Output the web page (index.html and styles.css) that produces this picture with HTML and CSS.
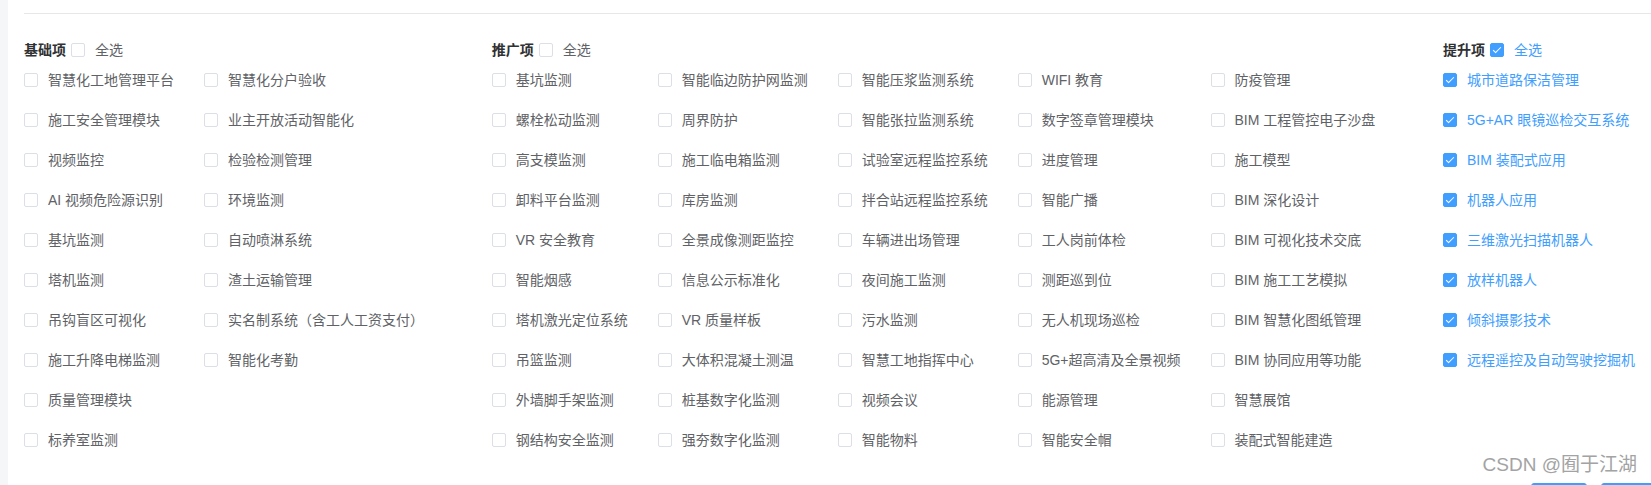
FILE: index.html
```html
<!DOCTYPE html>
<html lang="zh-CN">
<head>
<meta charset="utf-8">
<title>功能项选择</title>
<link rel="stylesheet" href="styles.css">
</head>
<body>
<div class="layout">
  <div class="side-strip"></div>
  <div class="main">
    <div class="top-line"></div>
    <div class="sections">
      <div class="section">
        <div class="sec-head">
          <span class="sec-title">基础项</span>
          <label class="cb"><span class="box"></span><span class="lbl">全选</span></label>
        </div>
        <div class="cols">
          <div class="col">
            <label class="cb"><span class="box"></span><span class="lbl">智慧化工地管理平台</span></label>
            <label class="cb"><span class="box"></span><span class="lbl">施工安全管理模块</span></label>
            <label class="cb"><span class="box"></span><span class="lbl">视频监控</span></label>
            <label class="cb"><span class="box"></span><span class="lbl">AI 视频危险源识别</span></label>
            <label class="cb"><span class="box"></span><span class="lbl">基坑监测</span></label>
            <label class="cb"><span class="box"></span><span class="lbl">塔机监测</span></label>
            <label class="cb"><span class="box"></span><span class="lbl">吊钩盲区可视化</span></label>
            <label class="cb"><span class="box"></span><span class="lbl">施工升降电梯监测</span></label>
            <label class="cb"><span class="box"></span><span class="lbl">质量管理模块</span></label>
            <label class="cb"><span class="box"></span><span class="lbl">标养室监测</span></label>
          </div>
          <div class="col">
            <label class="cb"><span class="box"></span><span class="lbl">智慧化分户验收</span></label>
            <label class="cb"><span class="box"></span><span class="lbl">业主开放活动智能化</span></label>
            <label class="cb"><span class="box"></span><span class="lbl">检验检测管理</span></label>
            <label class="cb"><span class="box"></span><span class="lbl">环境监测</span></label>
            <label class="cb"><span class="box"></span><span class="lbl">自动喷淋系统</span></label>
            <label class="cb"><span class="box"></span><span class="lbl">渣土运输管理</span></label>
            <label class="cb"><span class="box"></span><span class="lbl">实名制系统（含工人工资支付）</span></label>
            <label class="cb"><span class="box"></span><span class="lbl">智能化考勤</span></label>
          </div>
        </div>
      </div>

      <div class="section">
        <div class="sec-head">
          <span class="sec-title">推广项</span>
          <label class="cb"><span class="box"></span><span class="lbl">全选</span></label>
        </div>
        <div class="cols">
          <div class="col">
            <label class="cb"><span class="box"></span><span class="lbl">基坑监测</span></label>
            <label class="cb"><span class="box"></span><span class="lbl">螺栓松动监测</span></label>
            <label class="cb"><span class="box"></span><span class="lbl">高支模监测</span></label>
            <label class="cb"><span class="box"></span><span class="lbl">卸料平台监测</span></label>
            <label class="cb"><span class="box"></span><span class="lbl">VR 安全教育</span></label>
            <label class="cb"><span class="box"></span><span class="lbl">智能烟感</span></label>
            <label class="cb"><span class="box"></span><span class="lbl">塔机激光定位系统</span></label>
            <label class="cb"><span class="box"></span><span class="lbl">吊篮监测</span></label>
            <label class="cb"><span class="box"></span><span class="lbl">外墙脚手架监测</span></label>
            <label class="cb"><span class="box"></span><span class="lbl">钢结构安全监测</span></label>
          </div>
          <div class="col">
            <label class="cb"><span class="box"></span><span class="lbl">智能临边防护网监测</span></label>
            <label class="cb"><span class="box"></span><span class="lbl">周界防护</span></label>
            <label class="cb"><span class="box"></span><span class="lbl">施工临电箱监测</span></label>
            <label class="cb"><span class="box"></span><span class="lbl">库房监测</span></label>
            <label class="cb"><span class="box"></span><span class="lbl">全景成像测距监控</span></label>
            <label class="cb"><span class="box"></span><span class="lbl">信息公示标准化</span></label>
            <label class="cb"><span class="box"></span><span class="lbl">VR 质量样板</span></label>
            <label class="cb"><span class="box"></span><span class="lbl">大体积混凝土测温</span></label>
            <label class="cb"><span class="box"></span><span class="lbl">桩基数字化监测</span></label>
            <label class="cb"><span class="box"></span><span class="lbl">强夯数字化监测</span></label>
          </div>
          <div class="col">
            <label class="cb"><span class="box"></span><span class="lbl">智能压浆监测系统</span></label>
            <label class="cb"><span class="box"></span><span class="lbl">智能张拉监测系统</span></label>
            <label class="cb"><span class="box"></span><span class="lbl">试验室远程监控系统</span></label>
            <label class="cb"><span class="box"></span><span class="lbl">拌合站远程监控系统</span></label>
            <label class="cb"><span class="box"></span><span class="lbl">车辆进出场管理</span></label>
            <label class="cb"><span class="box"></span><span class="lbl">夜间施工监测</span></label>
            <label class="cb"><span class="box"></span><span class="lbl">污水监测</span></label>
            <label class="cb"><span class="box"></span><span class="lbl">智慧工地指挥中心</span></label>
            <label class="cb"><span class="box"></span><span class="lbl">视频会议</span></label>
            <label class="cb"><span class="box"></span><span class="lbl">智能物料</span></label>
          </div>
          <div class="col">
            <label class="cb"><span class="box"></span><span class="lbl">WIFI 教育</span></label>
            <label class="cb"><span class="box"></span><span class="lbl">数字签章管理模块</span></label>
            <label class="cb"><span class="box"></span><span class="lbl">进度管理</span></label>
            <label class="cb"><span class="box"></span><span class="lbl">智能广播</span></label>
            <label class="cb"><span class="box"></span><span class="lbl">工人岗前体检</span></label>
            <label class="cb"><span class="box"></span><span class="lbl">测距巡到位</span></label>
            <label class="cb"><span class="box"></span><span class="lbl">无人机现场巡检</span></label>
            <label class="cb"><span class="box"></span><span class="lbl">5G+超高清及全景视频</span></label>
            <label class="cb"><span class="box"></span><span class="lbl">能源管理</span></label>
            <label class="cb"><span class="box"></span><span class="lbl">智能安全帽</span></label>
          </div>
          <div class="col">
            <label class="cb"><span class="box"></span><span class="lbl">防疫管理</span></label>
            <label class="cb"><span class="box"></span><span class="lbl">BIM 工程管控电子沙盘</span></label>
            <label class="cb"><span class="box"></span><span class="lbl">施工模型</span></label>
            <label class="cb"><span class="box"></span><span class="lbl">BIM 深化设计</span></label>
            <label class="cb"><span class="box"></span><span class="lbl">BIM 可视化技术交底</span></label>
            <label class="cb"><span class="box"></span><span class="lbl">BIM 施工工艺模拟</span></label>
            <label class="cb"><span class="box"></span><span class="lbl">BIM 智慧化图纸管理</span></label>
            <label class="cb"><span class="box"></span><span class="lbl">BIM 协同应用等功能</span></label>
            <label class="cb"><span class="box"></span><span class="lbl">智慧展馆</span></label>
            <label class="cb"><span class="box"></span><span class="lbl">装配式智能建造</span></label>
          </div>
        </div>
      </div>

      <div class="section">
        <div class="sec-head">
          <span class="sec-title">提升项</span>
          <label class="cb checked"><span class="box"></span><span class="lbl">全选</span></label>
        </div>
        <div class="cols">
          <div class="col">
            <label class="cb checked"><span class="box"></span><span class="lbl">城市道路保洁管理</span></label>
            <label class="cb checked"><span class="box"></span><span class="lbl">5G+AR 眼镜巡检交互系统</span></label>
            <label class="cb checked"><span class="box"></span><span class="lbl">BIM 装配式应用</span></label>
            <label class="cb checked"><span class="box"></span><span class="lbl">机器人应用</span></label>
            <label class="cb checked"><span class="box"></span><span class="lbl">三维激光扫描机器人</span></label>
            <label class="cb checked"><span class="box"></span><span class="lbl">放样机器人</span></label>
            <label class="cb checked"><span class="box"></span><span class="lbl">倾斜摄影技术</span></label>
            <label class="cb checked"><span class="box"></span><span class="lbl">远程遥控及自动驾驶挖掘机</span></label>
          </div>
        </div>
      </div>
    </div>
    <div class="footer">
      <button class="btn" type="button"></button>
      <button class="btn btn-last" type="button"></button>
    </div>
  </div>
</div>
<div class="watermark">CSDN @囿于江湖</div>
</body>
</html>
```

FILE: styles.css
```css
html, body {
  margin: 0;
  padding: 0;
  background: #ffffff;
  overflow: hidden;
  height: 485px;
}

body {
  font-family: "Liberation Sans", "Noto Sans CJK SC", sans-serif;
  font-size: 14px;
  color: #606266;
  position: relative;
}

.layout {
  display: flex;
  min-height: 485px;
}

.side-strip {
  width: 8px;
  flex: none;
  background: #f5f6f8;
}

.main {
  flex: 1;
  padding-left: 16px;
  min-width: 0;
}

.top-line {
  margin-top: 13px;
  height: 1px;
  background: #e6e7ea;
}

.sections {
  display: flex;
  justify-content: space-between;
  padding-right: 16px;
  margin-top: 26px;
}

.section {
  display: flex;
  flex-direction: column;
}

.sec-head {
  display: flex;
  align-items: center;
  height: 20px;
  margin-bottom: 10px;
}

.sec-title {
  font-weight: bold;
  color: #303133;
  margin-right: 5px;
  line-height: 20px;
}

.cols {
  display: flex;
  gap: 30px;
}

.col {
  display: flex;
  flex-direction: column;
}

.cb {
  display: flex;
  align-items: center;
  height: 20px;
  line-height: 20px;
  white-space: nowrap;
  cursor: pointer;
}

.col .cb {
  margin-bottom: 20px;
}

.box {
  position: relative;
  width: 14px;
  height: 14px;
  box-sizing: border-box;
  border: 1px solid #dcdfe6;
  border-radius: 2px;
  background: #ffffff;
  flex: none;
}

.lbl {
  padding-left: 10px;
}

.checked .box {
  background: #409eff;
  border-color: #409eff;
}

.checked .box::after {
  content: "";
  position: absolute;
  left: 4px;
  top: 1px;
  width: 3px;
  height: 7px;
  border: 1px solid #ffffff;
  border-left: 0;
  border-top: 0;
  transform: rotate(45deg);
}

.checked .lbl {
  color: #409eff;
}

.footer {
  display: flex;
  justify-content: flex-end;
  gap: 14px;
  margin-top: 13px;
}

.btn {
  width: 56px;
  height: 32px;
  border: 1px solid #409eff;
  background: #409eff;
  border-radius: 3px;
  padding: 0;
}

.btn-last {
  margin-right: -6px;
}

.watermark {
  position: absolute;
  right: 14px;
  top: 454px;
  font-size: 19px;
  line-height: 22px;
  color: #a3a3a3;
  white-space: nowrap;
}
```
